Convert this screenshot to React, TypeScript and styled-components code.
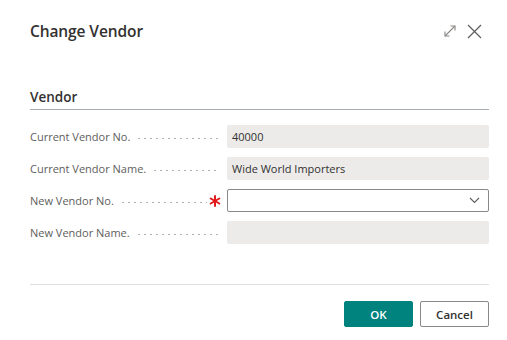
import styled, { createGlobalStyle } from "styled-components";

const GlobalStyle = createGlobalStyle`
    html, body {
        margin: 0;
        padding: 0;
        background: #ffffff;
    }
    body {
        font-family: "Open Sans", "Noto Sans", sans-serif;
        color: #323130;
    }
`;

const Dialog = styled.div`
    width: 507px;
    height: 340px;
    box-sizing: border-box;
    padding: 0 18px 0 30px;
    display: flex;
    flex-direction: column;
`;

const Header = styled.div`
    height: 62px;
    display: flex;
    align-items: center;
    justify-content: space-between;
`;

const Title = styled.h1`
    margin: 0;
    font-size: 15.5px;
    font-weight: 600;
    color: #323130;
    letter-spacing: -0.1px;
`;

const HeaderActions = styled.div`
    display: flex;
    align-items: center;
    gap: 10px;
    margin-right: 7px;
`;

const IconButton = styled.button`
    border: none;
    background: none;
    padding: 0;
    display: flex;
    color: #605e5c;
    cursor: pointer;
`;

const Section = styled.section`
    margin-top: 26px;
    flex: 1;
`;

const SectionTitle = styled.h2`
    margin: 0;
    padding-bottom: 3px;
    font-size: 13.5px;
    font-weight: 600;
    color: #323130;
    border-bottom: 1.5px solid #a7adb3;
`;

const Fields = styled.div`
    margin-top: 15px;
    display: flex;
    flex-direction: column;
    gap: 9px;
`;

const Row = styled.div`
    display: flex;
    align-items: center;
    height: 23px;
`;

const Label = styled.div`
    width: 197px;
    display: flex;
    align-items: center;
    font-size: 11px;
    color: #605e5c;
    white-space: nowrap;
`;

const Leader = styled.span`
    flex: 1;
    height: 3px;
    margin: 4px 8px 0 6px;
    background-image: radial-gradient(circle, #b3b0ad 0.7px, transparent 1px);
    background-size: 6px 3px;
    background-repeat: repeat-x;
`;

const Required = styled.span`
    display: flex;
    margin: 0 6px 0 -6px;
`;

const Field = styled.div<{ $editable?: boolean }>`
    flex: 1;
    height: 23px;
    box-sizing: border-box;
    display: flex;
    align-items: center;
    padding: 0 8px 0 5px;
    font-size: 11px;
    color: #323130;
    background: ${({ $editable }) => ($editable ? "#ffffff" : "#edebe9")};
    border: ${({ $editable }) => ($editable ? "1px solid #8a8886" : "none")};
    border-radius: 2px;
`;

const Chevron = styled.span`
    margin-left: auto;
    display: flex;
`;

const Footer = styled.div`
    border-top: 1px solid #e1dfdd;
    margin-bottom: 13px;
    padding-top: 16px;
    display: flex;
    justify-content: flex-end;
    gap: 7px;
`;

const Button = styled.button<{ $primary?: boolean }>`
    width: 69px;
    height: 26px;
    box-sizing: border-box;
    font-family: inherit;
    font-size: 11.5px;
    font-weight: 600;
    border-radius: 2px;
    cursor: pointer;
    color: ${({ $primary }) => ($primary ? "#ffffff" : "#323130")};
    background: ${({ $primary }) => ($primary ? "#00827f" : "#ffffff")};
    border: 1px solid ${({ $primary }) => ($primary ? "#00827f" : "#8a8886")};
`;

function ExpandIcon() {
    return (
        <svg width="14" height="14" viewBox="0 0 14 14" fill="none" stroke="#8a8886" strokeWidth="1.1">
            <path d="M2 12 L12 2" />
            <path d="M7.5 2 H12 V6.5" />
            <path d="M2 7.5 V12 H6.5" />
        </svg>
    );
}

function CloseIcon() {
    return (
        <svg width="15" height="15" viewBox="0 0 15 15" fill="none" stroke="#605e5c" strokeWidth="1.2">
            <path d="M1 1 L14 14" />
            <path d="M14 1 L1 14" />
        </svg>
    );
}

function ChevronIcon() {
    return (
        <svg width="11" height="7" viewBox="0 0 11 7" fill="none" stroke="#605e5c" strokeWidth="1.1">
            <path d="M1 1 L5.5 5.5 L10 1" />
        </svg>
    );
}

function AsteriskIcon() {
    return (
        <svg width="12" height="12" viewBox="0 0 12 12" fill="none" stroke="#e21c1c" strokeWidth="2" strokeLinecap="round">
            <path d="M6 1 V11" />
            <path d="M1.7 3.5 L10.3 8.5" />
            <path d="M10.3 3.5 L1.7 8.5" />
        </svg>
    );
}

const rows = [
    { label: "Current Vendor No.", value: "40000" },
    { label: "Current Vendor Name.", value: "Wide World Importers" },
    { label: "New Vendor No.", value: "", editable: true, required: true },
    { label: "New Vendor Name.", value: "" },
];

export default function App() {
    return (
        <>
            <GlobalStyle />
            <Dialog>
                <Header>
                    <Title>Change Vendor</Title>
                    <HeaderActions>
                        <IconButton aria-label="Expand">
                            <ExpandIcon />
                        </IconButton>
                        <IconButton aria-label="Close">
                            <CloseIcon />
                        </IconButton>
                    </HeaderActions>
                </Header>
                <Section>
                    <SectionTitle>Vendor</SectionTitle>
                    <Fields>
                        {rows.map((row) => (
                            <Row key={row.label}>
                                <Label>
                                    {row.label}
                                    <Leader />
                                    {row.required && (
                                        <Required>
                                            <AsteriskIcon />
                                        </Required>
                                    )}
                                </Label>
                                <Field $editable={row.editable}>
                                    {row.value}
                                    {row.editable && (
                                        <Chevron>
                                            <ChevronIcon />
                                        </Chevron>
                                    )}
                                </Field>
                            </Row>
                        ))}
                    </Fields>
                </Section>
                <Footer>
                    <Button $primary>OK</Button>
                    <Button>Cancel</Button>
                </Footer>
            </Dialog>
        </>
    );
}
